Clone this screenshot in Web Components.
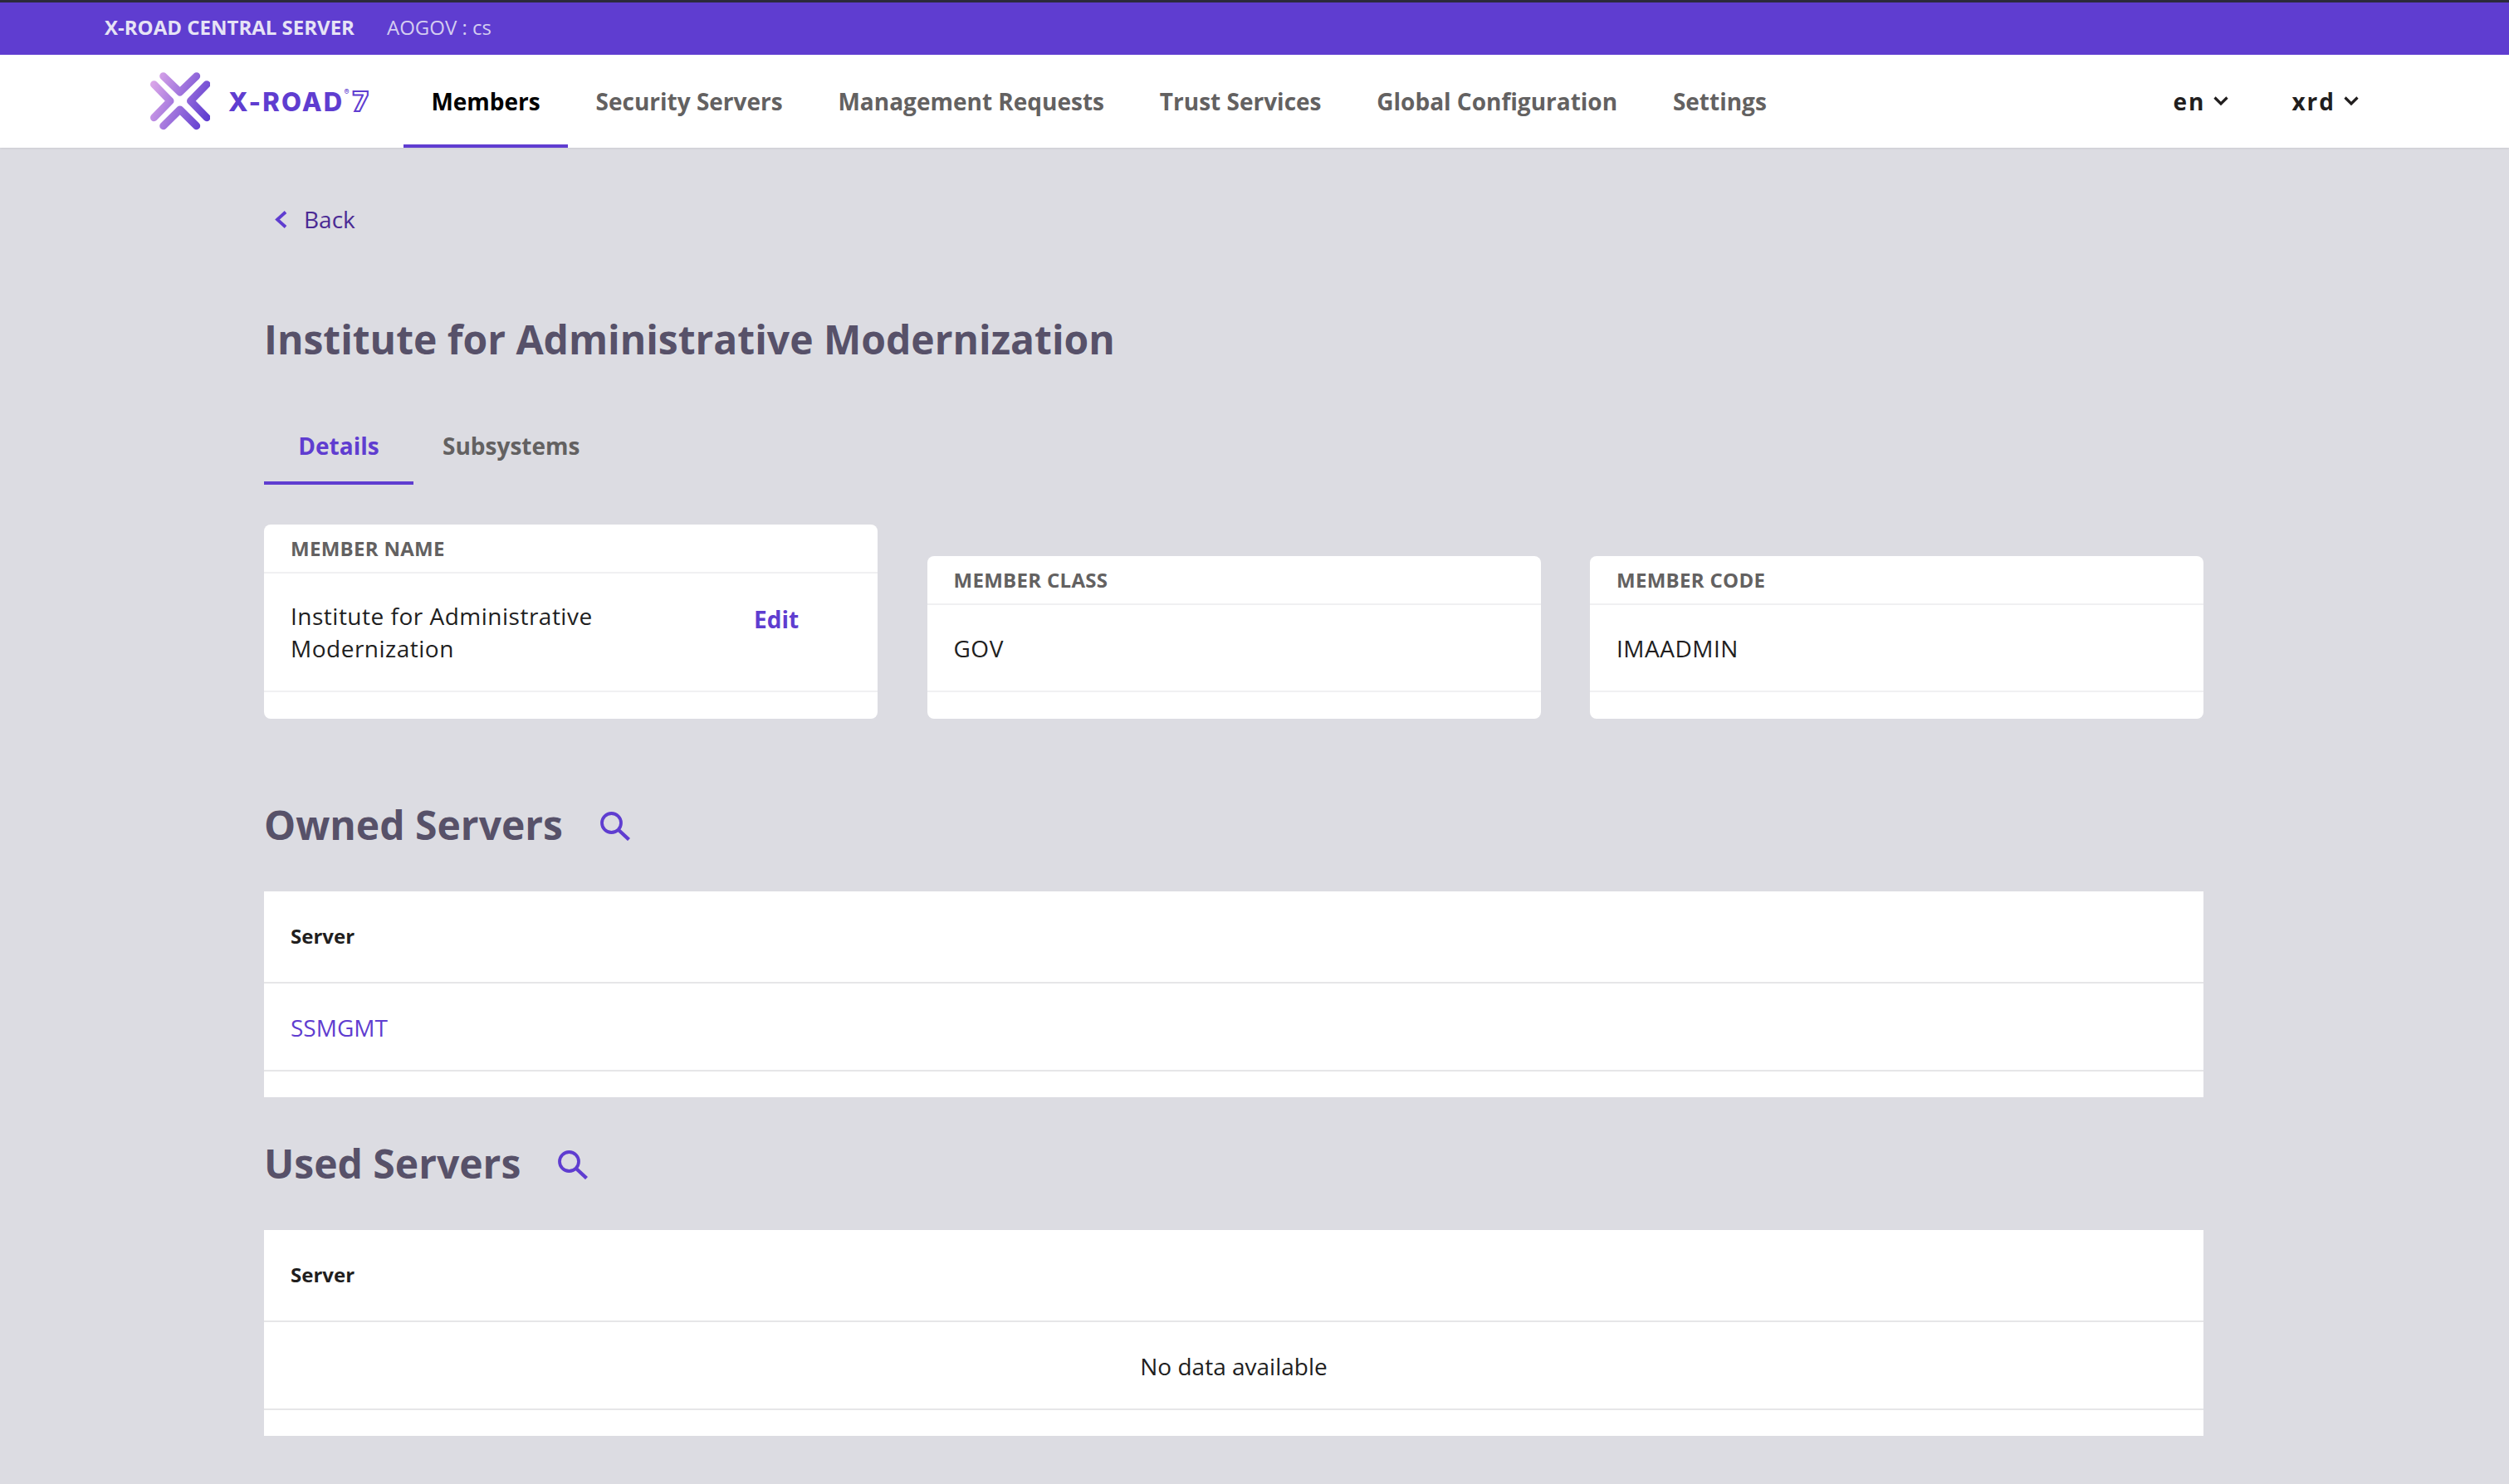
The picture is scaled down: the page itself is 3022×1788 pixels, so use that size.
<!DOCTYPE html>
<html lang="en">
<head>
<meta charset="utf-8">
<title>X-Road Central Server</title>
<style>
    html, body {
        margin: 0;
        padding: 0;
        background: #dcdce2;
        font-family: "Open Sans", "Liberation Sans", sans-serif;
        color: #211e1e;
    }
</style>
</head>
<body>
<xrd-topbar></xrd-topbar>
<xrd-navbar>
    <xrd-nav-item active>Members</xrd-nav-item>
    <xrd-nav-item>Security Servers</xrd-nav-item>
    <xrd-nav-item>Management Requests</xrd-nav-item>
    <xrd-nav-item>Trust Services</xrd-nav-item>
    <xrd-nav-item>Global Configuration</xrd-nav-item>
    <xrd-nav-item>Settings</xrd-nav-item>
</xrd-navbar>
<xrd-page>
    <xrd-back-link>Back</xrd-back-link>
    <xrd-title>Institute for Administrative Modernization</xrd-title>
    <xrd-tabs>
        <xrd-tab active>Details</xrd-tab>
        <xrd-tab>Subsystems</xrd-tab>
    </xrd-tabs>
    <xrd-card-row>
        <xrd-info-card label="MEMBER NAME" action="Edit">Institute for Administrative Modernization</xrd-info-card>
        <xrd-info-card label="MEMBER CLASS">GOV</xrd-info-card>
        <xrd-info-card label="MEMBER CODE">IMAADMIN</xrd-info-card>
    </xrd-card-row>
    <xrd-section heading="Owned Servers" top="92">
        <xrd-table link>SSMGMT</xrd-table>
    </xrd-section>
    <xrd-section heading="Used Servers" top="44">
        <xrd-table empty>No data available</xrd-table>
    </xrd-section>
</xrd-page>

<script>
function define(name, html, init) {
    customElements.define(name, class extends HTMLElement {
        constructor() {
            super();
            this.attachShadow({ mode: 'open' }).innerHTML = html;
        }
        connectedCallback() {
            if (init) init.call(this, this.shadowRoot);
        }
    });
}

const chevronDown = `<svg width="18" height="12" viewBox="0 0 18 12" fill="none" stroke="#211e1e" stroke-width="3.2"><path d="M1.500 1.500 9 9l7.500-7.500"/></svg>`;

const searchIcon = `<svg width="36" height="35" viewBox="0 0 36 35" fill="none" stroke="#5f3dd0" stroke-width="3.800"><circle cx="13.500" cy="13.500" r="11.500"/><path d="M21.500 21.500 34.500 33.500" stroke-width="4.400"/></svg>`;

define('xrd-topbar', `
    <style>
        :host {
            display: flex;
            align-items: center;
            box-sizing: border-box;
            height: 66px;
            padding: 0 0 5px 126px;
            background: #5f3dd0;
            border-top: 3px solid #2b2a3c;
            color: #e6e3f5;
            font-size: 24px;
        }
        b { font-weight: 700; margin-right: 39px; }
        span { font-weight: 400; color: #d4cdf0; }
    </style>
    <b>X-ROAD CENTRAL SERVER</b><span>AOGOV : cs</span>
`);

define('xrd-navbar', `
    <style>
        :host {
            display: flex;
            box-sizing: border-box;
            height: 112px;
            padding: 0 0 0 181px;
            background: #fff;
            box-shadow: 0 1px 2px rgba(0,0,0,.08);
            position: relative;
        }
        .logo { display: flex; align-items: center; width: 305px; flex: none; }
        .word {
            margin-left: 22px;
            color: #5f3dd0;
            font: 800 31px Inter, "Open Sans", sans-serif;
            letter-spacing: 2.200px;
            display: flex;
            align-items: flex-start;
        }
        sup { font-size: 9px; font-weight: 500; margin: 2px 0 0 0; letter-spacing: 0; line-height: 1; }
        .seven {
            margin-left: 4px;
            font-size: 33px;
            color: #fff;
            -webkit-text-stroke: 2px #5f3dd0;
            line-height: 36px;
            letter-spacing: 0;
        }
        .items { display: flex; flex: 1; }
        .right { display: flex; align-items: center; padding-right: 181px; gap: 76px; }
        .menu { display: flex; align-items: center; gap: 10px; font-size: 28px; font-weight: 700; letter-spacing: 2px; }
    </style>
    <div class="logo">
        <svg width="72" height="72" viewBox="0 0 72 72" fill="none" stroke-width="9" stroke-linecap="round" stroke-linejoin="round">
            <defs>
                <linearGradient id="g" gradientUnits="userSpaceOnUse" x1="0" y1="20" x2="72" y2="50">
                    <stop offset="0" stop-color="#d9a5e8"/>
                    <stop offset="1" stop-color="#5f3dd0"/>
                </linearGradient>
            </defs>
            <path stroke="url(#g)" d="M15.700 5.700 35.700 25 55.700 5.700"/>
            <path stroke="url(#g)" d="M4.500 15.700 24 35.700 4.500 55.700"/>
            <path stroke="url(#g)" d="M68 15.700 48.500 35.700 68 55.700"/>
            <path stroke="url(#g)" d="M15.700 65.700 35.700 46 55.700 65.700"/>
        </svg>
        <div class="word">X-ROAD<sup>®</sup><span class="seven">7</span></div>
    </div>
    <div class="items"><slot></slot></div>
    <div class="right">
        <div class="menu">en ${chevronDown}</div>
        <div class="menu">xrd ${chevronDown}</div>
    </div>
`);

define('xrd-nav-item', `
    <style>
        :host {
            display: flex;
            align-items: center;
            box-sizing: border-box;
            padding: 0 33.400px;
            font-size: 28px;
            font-weight: 700;
            color: #636161;
            border-bottom: 4px solid transparent;
            border-top: 4px solid transparent;
        }
        :host([active]) { color: #000; border-bottom-color: #5f3dd0; }
    </style>
    <slot></slot>
`);

define('xrd-page', `
    <style>
        :host {
            display: block;
            box-sizing: border-box;
            padding: 0 368px 0 318px;
        }
    </style>
    <slot></slot>
`);

define('xrd-back-link', `
    <style>
        :host {
            display: flex;
            align-items: center;
            gap: 20px;
            padding: 66px 0 0 13px;
            height: 40px;
            font-size: 28px;
            color: #4a2a94;
        }
    </style>
    <svg width="15" height="21" viewBox="0 0 15 21" fill="none" stroke="#5f3dd0" stroke-width="3.800"><path d="M13 1.500 3 10.500l10 9"/></svg>
    <slot></slot>
`);

define('xrd-title', `
    <style>
        :host {
            display: block;
            margin-top: 90px;
            font-size: 48px;
            line-height: 70px;
            font-weight: 700;
            color: #575169;
        }
    </style>
    <slot></slot>
`);

define('xrd-tabs', `
    <style>
        :host { display: flex; margin-top: 46px; height: 94px; }
    </style>
    <slot></slot>
`);

define('xrd-tab', `
    <style>
        :host {
            display: flex;
            align-items: center;
            box-sizing: border-box;
            padding: 4px 35px 0 35px;
            min-width: 180px;
            justify-content: center;
            font-size: 28px;
            font-weight: 700;
            color: #636161;
            border-bottom: 4px solid transparent;
        }
        :host([active]) { color: #5f3dd0; border-bottom-color: #5f3dd0; }
    </style>
    <slot></slot>
`);

define('xrd-card-row', `
    <style>
        :host {
            display: grid;
            grid-template-columns: repeat(3, 739px);
            justify-content: space-between;
            align-items: end;
            margin-top: 48px;
        }
    </style>
    <slot></slot>
`);

define('xrd-info-card', `
    <style>
        :host {
            display: block;
            background: #fff;
            border-radius: 8px;
            padding-bottom: 32px;
        }
        .head {
            display: flex;
            align-items: center;
            box-sizing: border-box;
            height: 59px;
            padding: 0 32px;
            font-size: 24px;
            font-weight: 700;
            letter-spacing: .3px;
            color: #636161;
            border-bottom: 2px solid #f0f0f2;
        }
        .body {
            display: flex;
            align-items: center;
            box-sizing: border-box;
            min-height: 105px;
            padding: 32px 32px 31px;
            font-size: 28px;
            line-height: 39px;
            letter-spacing: .5px;
            border-bottom: 2px solid #f0f0f2;
        }
        .text { width: 400px; flex: none; }
        .action {
            margin-left: 158px;
            margin-top: -31px;
            font-weight: 700;
            letter-spacing: 0;
            color: #5f3dd0;
        }
    </style>
    <div class="head"></div>
    <div class="body"><div class="text"><slot></slot></div></div>
`, function (root) {
    root.querySelector('.head').textContent = this.getAttribute('label');
    const action = this.getAttribute('action');
    if (action) {
        const $action = document.createElement('div');
        $action.className = 'action';
        $action.textContent = action;
        root.querySelector('.body').appendChild($action);
    }
});

define('xrd-section', `
    <style>
        :host { display: block; }
        .head { display: flex; align-items: center; gap: 45px; height: 70px; margin-bottom: 46px; }
        h2 { margin: 2px 0 0; font-size: 48px; line-height: 68px; font-weight: 700; color: #575169; }
        svg { margin-top: 4px; }
    </style>
    <div class="head"><h2></h2>${searchIcon}</div>
    <slot></slot>
`, function (root) {
    root.querySelector('h2').textContent = this.getAttribute('heading');
    root.querySelector('.head').style.marginTop = this.getAttribute('top') + 'px';
});

define('xrd-table', `
    <style>
        :host {
            display: block;
            background: #fff;
            padding-bottom: 31px;
        }
        .head {
            display: flex;
            align-items: center;
            box-sizing: border-box;
            height: 111px;
            padding: 0 32px 2px;
            font-size: 24px;
            font-weight: 700;
            border-bottom: 2px solid #e6e6e8;
        }
        .row {
            display: flex;
            align-items: center;
            box-sizing: border-box;
            height: 106px;
            padding: 2px 32px 0;
            font-size: 28px;
            border-bottom: 2px solid #e6e6e8;
        }
        :host([link]) .row { color: #5f3dd0; }
        :host([empty]) .row { justify-content: center; }
    </style>
    <div class="head">Server</div>
    <div class="row"><slot></slot></div>
`);
</script>
</body>
</html>
